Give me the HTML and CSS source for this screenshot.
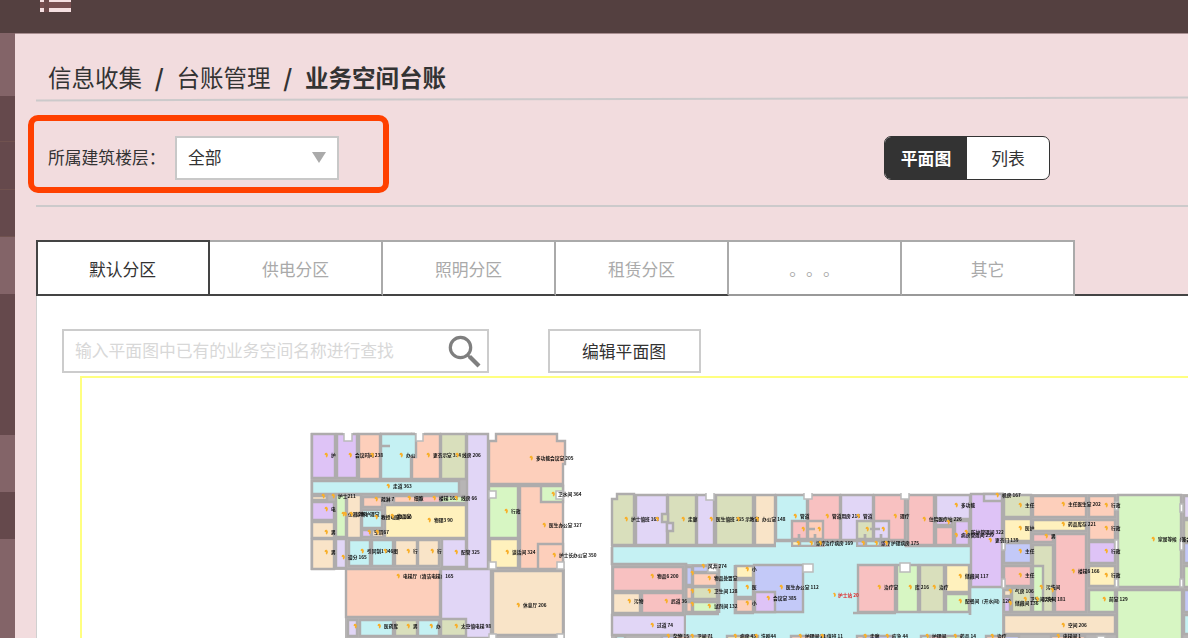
FILE: index.html
```html
<!DOCTYPE html>
<html lang="zh-CN">
<head>
<meta charset="utf-8">
<title>业务空间台账</title>
<link rel="stylesheet" href="styles.css">
</head>
<body>
<header class="topbar">
  <svg class="menu-icon" width="32" height="13" viewBox="0 0 32 13"><path class="menu-back" d="M0 0H31V12H0Z"/><path class="menu-gap" d="M4 0H9V12H4Z"/><path class="menu-line" d="M0 0H4V2H0ZM9 0H31V2H9ZM0 8H4V12H0ZM9 8H31V12H9Z"/></svg>
</header>
<div class="shell">
  <aside class="rail">
    <i class="rail-item light h63"></i><i class="rail-item h46"></i><i class="rail-item h48"></i><i class="rail-item h47"></i>
    <i class="rail-item light h57"></i><i class="rail-item plain h141"></i><i class="rail-item light h57"></i><i class="rail-item plain h47"></i><i class="rail-item light rest"></i>
  </aside>
  <main class="main">
    <nav class="crumbs"><span>信息收集</span><span class="slash">/</span><span>台账管理</span><span class="slash">/</span><b>业务空间台账</b></nav>
    <div class="rule tilted"></div>
    <section class="filter">
      <div class="highlight"></div>
      <label class="filter-label">所属建筑楼层：</label>
      <div class="select"><span>全部</span><svg width="14" height="11" viewBox="0 0 14 11"><path d="M0 0H14L7 11Z" fill="#aaa"/></svg></div>
      <div class="toggle"><span class="toggle-item active">平面图</span><span class="toggle-item">列表</span></div>
    </section>
    <div class="rule"></div>
    <div class="tabs">
      <div class="tab active">默认分区</div><div class="tab dark-base">供电分区</div><div class="tab dark-base">照明分区</div><div class="tab dark-base">租赁分区</div><div class="tab">。。。</div><div class="tab">其它</div><div class="tab-fill"></div>
    </div>
    <section class="panel">
      <div class="tools">
        <div class="search"><span>输入平面图中已有的业务空间名称进行查找</span>
          <svg width="34" height="34" viewBox="0 0 34 34" fill="none" stroke="#7f7f7f"><circle cx="13.500" cy="13.500" r="10.200" stroke-width="3.200"/><path d="M20.500 21L23.500 24" stroke-width="2.500"/><path d="M22.500 22.500L32 32" stroke-width="4.200"/></svg>
        </div>
        <button class="edit">编辑平面图</button>
      </div>
      <div class="plan-frame"><svg id="plan" class="plan" width="1106" height="260" viewBox="82 378 1106 260"></svg></div>
    </section>
  </main>
</div>
<script src="script.js"></script>
</body>
</html>
```

FILE: styles.css
```css
* { box-sizing: border-box; }
body { margin: 0; height: 638px; overflow: hidden; background: #f2dcde; color: #333; font: 16.8px/24px "Noto Sans CJK SC", sans-serif; text-spacing-trim: space-all; }
.topbar { height: 33px; background: #544040; padding-left: 40px; }
.menu-icon { display: block; }
.menu-back { fill: #794f50; }
.menu-gap { fill: #6d4a4b; }
.menu-line { fill: #f5dfe1; }
.shell { display: flex; height: 605px; }
.rail { width: 15px; flex: none; display: flex; flex-direction: column; }
.rail-item { flex: none; background: #65494c; border-bottom: 1px solid #70524f; }
.rail-item.light { background: #836468; border-color: #836468; }
.rail-item.plain { border-color: #65494c; }
.h46 { height: 46px; } .h47 { height: 47px; } .h48 { height: 48px; }
.h57 { height: 57px; } .h63 { height: 63px; } .h141 { height: 141px; }
.rail-item.rest { flex: 1; }
.main { width: 1173px; flex: none; padding-left: 21px; border-top: 1px solid #a98f91; }
.crumbs { height: 65px; padding: 26px 0 0 12px; display: flex; font-size: 23.500px; line-height: 34px; }
.slash { width: 34.500px; text-align: center; font-weight: 700; }
.crumbs b { font-weight: 700; }
.rule { height: 2px; width: 1152px; background: #cccacb; }
.rule.tilted { transform: rotate(-0.14deg); margin-top: -1px; }
.filter { position: relative; height: 105px; padding: 36px 0 0 12px; display: flex; }
.highlight { position: absolute; left: -8px; top: 15px; width: 361px; height: 78px; border: 6px solid #ff4000; border-radius: 10px; }
.filter-label { width: 127px; line-height: 42px; white-space: nowrap; }
.select { width: 164px; height: 44px; border: 2px solid #c8c8c8; background: #fff; padding: 0 11px 2px; display: flex; align-items: center; justify-content: space-between; }
.toggle { margin-left: 545px; width: 166px; height: 44px; border: 1.500px solid #333; border-radius: 7px; display: flex; overflow: hidden; background: #fff; }
.toggle-item { flex: 1; text-align: center; line-height: 42px; }
.toggle-item.active { background: #333; color: #fff; font-weight: 700; }
.tabs { margin-top: 33px; display: flex; height: 56px; }
.tab { width: 173px; flex: none; border: 2px solid #aaa; border-left: 0; border-bottom-color: #999; background: #fff; color: #aaa; text-align: center; line-height: 54px; }
.tab.dark-base { border-bottom-color: #444; }
.tab.active { width: 174px; border: 2px solid #444; color: #333; padding-right: 1px; }
.tab-fill { flex: 1; border-bottom: 2px solid #444; }
.panel { background: #fff; border-left: 1.500px solid #d0d0d0; padding: 33px 0 0 25px; }
.tools { display: flex; gap: 59px; height: 44px; }
.search { width: 427px; border: 2px solid #ccc; padding: 0 6px 0 11px; display: flex; align-items: center; justify-content: space-between; color: #d8d8d8; white-space: nowrap; }
.search span { padding-bottom: 2px; }
.edit { width: 153px; border: 2px solid #ccc; background: #fff; font: inherit; color: #333; padding: 0 1px 1px 0; }
.plan-frame { margin: 3px 0 0 18px; border: 2px solid #ffff80; border-width: 2px 0 0 2px; }
.plan { display: block; filter: blur(.6px); }
.room { stroke: #aeacac; stroke-width: 2.400; }
.block { fill: #b7b5b5; }
.void { fill: #fff; stroke: #bbb; stroke-width: 1.500; }
.notch { fill: #fff; }
.wall { fill: none; stroke: #aeacac; stroke-width: 2.700; }
.name { font: 700 4.700px "Noto Sans CJK SC", sans-serif; fill: #111; }
.name.alert { fill: #e02020; }
.bolt { fill: #f8b02c; }
```

FILE: script.js
```js
const colors = { p: '#dec3f6', s: '#fdcfbb', c: '#c5f1f3', o: '#d9dfbc', l: '#e1d6f6', y: '#fff1bd', b: '#f9e4c8', g: '#d7f6c3', r: '#f8c1c1', u: '#c3c9f8' };
const svg = document.getElementById('plan');
let out = '';
const path = (cls, d, fill) => { out += `<path class="${cls}" d="${d}"${fill ? ` fill="${fill}"` : ''}/>`; };
const box = (x1, y1, x2, y2) => `M${x1} ${y1}H${x2}V${y2}H${x1}Z`;

// Building outlines
[[310.5,433,489,570],[345,568,493,638],[488,441,564,570],[491,569,565,638],[617,494,1116,547],[611,499,620,547],[611,545,1188,638],[1087,494,1188,592]]
  .forEach(r => path('block', box(...r)));

// Rooms: colour, left, top, right, bottom
`p 312 434 335 478|p 337 434 357 478|s 359 434 380 479|c 381 434 411 479|s 412 434 440 479|o 441 434 466 479|l 467 434 488 638|c 312 481 459 494
l 441 569 491 638|l 442 539 466 567|b 312 496 327 500|p 312 502 334 520|b 312 522 334 538|g 336 495 346 537|b 347 495 361 538|s 363 497 382 507
c 362 510 382 528|p 362 530 371 537|b 372 530 384 537|s 394 496 419 503|r 421 496 440 503|g 441 496 466 503|y 385 505 466 538|b 312 539 334 569
l 336 539 346 568|c 349 540 370 566|c 372 540 393 566|b 395 540 417 566|b 418 540 439 566|s 346 569 440 617|l 348 620 357 636|c 360 620 393 636
o 395 620 417 636|c 418 620 439 636|o 441 619 466 636|g 489 486 518 538|s 520 486 563 569|g 541 486 563 502|y 490 539 518 568|s 538 544 563 569|b 493 571 563 635
l 636 495 667 545|o 668 495 696 545|l 697 495 714 545|o 716 495 753 545|b 755 495 775 545|c 776 495 807 540|r 808 495 840 540|l 841 495 873 540|r 874 495 905 540
r 908 495 934 545|l 936 495 970 519|p 936 520 952 525|r 936 527 953 545|p 955 521 969 545|r 792 521 807 539|s 808 521 823 539|y 792 541 799 546|c 800 541 815 546|g 816 541 823 546
o 857 521 873 539|l 874 521 889 539|u 857 541 865 546|c 866 541 880 546|p 881 541 889 546
r 613 567 683 591|b 613 593 640 613|r 642 593 683 613|l 612 615 685 635|u 686 567 692 585|u 693 566 708 572|s 693 573 717 586|o 693 587 717 599|g 693 602 717 612|s 686 587 692 599|s 686 602 692 612`
.split(/[|\n]/).forEach(addRoom);
function addRoom(r) { const [c, ...p] = r.split(' '); path('room', box(...p), colors[c]); }

// Irregular rooms and the central corridor
path('room', 'M381 434H416V457H411V479H381Z', colors.c);
path('room', 'M496 434H557V441H565V464H563V484H489V441H496Z', colors.s);
path('room', 'M617 494H634V545H612V499H617Z', colors.o);
path('room', 'M668 514H662V522H668Z', colors.o);
path('room', 'M667 523H673V531H667Z', colors.l);
out += `<path d="M612 547H970V564H1002V638H686V614H719V564H612Z" fill="${colors.c}"/><path d="M776 540H791V550H776ZM825 540H856V550H825ZM890 540H906V550H890Z" fill="${colors.c}"/>`;
path('wall', 'M612 546H776M612 547V564H686V614M719 564V613M776 541H791M824 541H856M890 541H906V546H970M686 614H719M735 565V613H754');

`y 736 566 753 578|c 736 580 753 597|s 736 599 753 612|u 754 565 803 612|p 755 592 775 612|r 858 565 895 612|g 897 565 918 612|o 920 565 944 612|y 946 565 969 592|g 946 594 969 612
p 971 494 1002 587|l 984 494 1002 501|o 1004 495 1031 517|y 1004 519 1031 541|u 1004 543 1031 563|r 1004 566 1031 586|b 1004 590 1011 596|p 1004 597 1010 612|o 1012 588 1031 612
o 1033 545 1053 612|g 1033 566 1043 612|s 1033 496 1086 517|y 1033 520 1086 531|r 1033 534 1053 542|r 1055 534 1086 612|s 1089 496 1115 517|s 1089 520 1115 540|p 1089 542 1115 563|y 1089 566 1115 586|g 1089 590 1115 612
g 1118 495 1181 587|g 1117 590 1182 640|l 1184 496 1192 518|o 1184 520 1192 541|u 1184 543 1192 563|g 1184 566 1192 587|u 1184 590 1192 612|c 1184 615 1192 634|b 1004 615 1115 634
p 662 636 670 642|c 616 636 625 642|u 662 636 675 642|s 675 636 689 642|o 689 636 710 642|y 727 636 747 642|g 747 636 758 642|s 791 636 810 642|c 810 636 826 642|s 857 636 864 642|u 864 636 893 642|c 921 636 930 642|r 930 636 946 642|g 946 636 961 642|s 986 636 1005 642|u 1005 636 1019 642|s 1051 636 1085 642`
.split(/[|\n]/).forEach(addRoom);

// Open shafts and wall recesses
[[344,431,352,441],[416,431,423,441],[706,491,714,500],[804,491,812,499],[901,491,909,499]].forEach(r => path('void', box(...r)));
[[343,430,353,433],[415,430,424,433],[705,490,715,493],[803,490,813,493],[900,490,910,493]].forEach(r => path('notch', box(...r)));
[[489,491,496,498],[556,491,563,499],[489,562,496,569],[557,562,564,569],[489,634,496,640],[557,634,564,640],[803,564,813,572],[900,563,910,572],[708,564,717,572],[1002,542,1005,550],[1002,579,1005,588],[1115,502,1118,510],[1115,540,1118,550],[1115,579,1118,587],[1180,504,1183,512],[1180,540,1183,550],[1180,579,1183,587],[1097,636,1105,640]].forEach(r => path('void', box(...r)));
path('wall', 'M381 446H390M806 529H815M870 529H880M799 534V539M815 534V539M865 534V539M881 534V539M853 613H896M970 565V615');

// Room captions: bolt x, centre y, caption
`326 455 护|350 455 会议时间 238|372 455|401 455 办公|428 455 更衣示室 354|457 455 线房 206|388 486 走道 363|323 496|333 496 护士211|376 499 疏淋 7|409 498 细胞|434 498 楼梯 162|456 498 线房 66|326 509 电|345 514|343 514 仪器 206|351 514 诊断护理室|376 517 教授电脑2 100|429 520 物理3 90|369 532 空调67|377 532|326 532 男|326 552 男|343 557 谱分 165|362 551 引同制1 046图|385 551|408 551 行|432 551 行|456 552 配管 325|398 576 电梯厅（清洁电梯）165|355 626|379 626 医药库|408 626 男|431 626 办|456 626 太空值电梯 98
531 458 多功能会议室 205|553 494 卫水间 364|506 511 行政|544 525 医生办公室 327|507 552 谈话间 324|554 555 护士长办公室 350|518 605 休息厅 206
626 519 护士值班 162|657 519|683 519 走廊|711 519 医生值班 165 示教室|738 519|757 519 办公室 148|795 516 管道|827 516 管道用房 216|858 516 管道|895 516 理疗|924 519 住院医疗站 226|956 505 多功能|948 522|956 535 病房管理间 239|966 532 防护管理间 322|997 495 机房 167|990 540 更衣门 139|1020 505 主任|1020 528 医护|1020 551 主任|1020 575 主任|1063 504 主任医生室 202|1063 524 药品库存 221|1106 505 行政|1106 528 行政|1106 551 行政|1106 575 行政|1153 539 家属等候（兼会议）|1046 536 男
803 529|819 529|867 529|883 529|798 543|811 543 诊疗|820 543 治疗病房 169|863 543|876 543 诊疗|886 543 护理病房 175
652 576 物品6 200|629 601 污物|666 601 武道 36|652 625 过道 74|703 566 风井 274|692 573|709 578 物品处置室|692 591|709 591 卫生间 128|692 604|709 606 试剂间 132|747 569 小|747 587 医|747 603 小|781 587 医生办公室 112|768 598 会议室 385|879 587 治疗室|910 587 库 216|934 587 治疗|960 576 储藏间 117|960 601 配餐间（开水间）120|1010 591 气房 106|1010 603 储藏间 136|1025 599 卫生间 104|1041 587 污洗间|1052 590|1073 571 楼梯6 166|1104 599 前室 129|1063 625 空间 206
668 636 杂物 15|692 636 卫间 71|735 636 病房 43|756 636 洗刷44|800 636 护理间 21|822 636 值班 11|865 636 走廊|887 636 应急 44|927 636 护理间|955 636 药品 14|992 636 治疗|1058 636 电梯间 1|392 516 物品室|1037 599 污洗间 181`
.split(/[|\n]/).forEach(row => {
  const [x, y, ...name] = row.split(' ');
  out += `<path class="bolt" d="M${x - 1} ${y - 2}l2 -.3 1 2.300-1 2.500-1.200-.4.300-1.800-1.500-.4Z"/>`;
  if (name.length) out += `<text class="name" x="${+x + 5}" y="${+y + 2}">${name.join(' ')}</text>`;
});
out += '<path class="bolt" d="M833 593l2-.3 1 2.300-1 2-1.200-.4.300-1.600Z"/><text class="name alert" x="838" y="597">护士站 20</text>';
svg.innerHTML = out;
```
